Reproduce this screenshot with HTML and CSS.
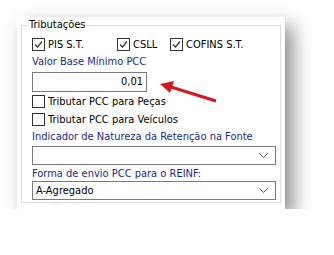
FILE: index.html
```html
<!DOCTYPE html>
<html lang="pt">
<head>
  <meta charset="UTF-8" />
  <title>Tributações</title>
  <link rel="stylesheet" href="styles.css">
</head>
<body>
  <div class="shot">
    <fieldset class="group">
      <legend>Tributações</legend>

      <div class="checks">
        <label class="chk w-pis"><span class="box"><svg viewBox="0 0 11 11"><path d="M2 5.5 L4.5 8 L9 2.5" /></svg></span>PIS S.T.</label>
        <label class="chk w-csll"><span class="box"><svg viewBox="0 0 11 11"><path d="M2 5.5 L4.5 8 L9 2.5" /></svg></span>CSLL</label>
        <label class="chk"><span class="box"><svg viewBox="0 0 11 11"><path d="M2 5.5 L4.5 8 L9 2.5" /></svg></span>COFINS S.T.</label>
      </div>

      <div class="field-label">Valor Base Mínimo PCC</div>
      <div class="num-input">0,01</div>

      <label class="chk row"><span class="box"></span>Tributar PCC para Peças</label>
      <label class="chk row"><span class="box"></span>Tributar PCC para Veículos</label>

      <div class="field-label">Indicador de Natureza da Retenção na Fonte</div>
      <div class="combo">
        <span></span>
        <svg class="chev" viewBox="0 0 9 5"><path d="M0.5 0.5 L4.5 4.5 L8.5 0.5" /></svg>
      </div>

      <div class="field-label">Forma de envio PCC para o REINF:</div>
      <div class="combo last">
        <span>A-Agregado</span>
        <svg class="chev" viewBox="0 0 9 5"><path d="M0.5 0.5 L4.5 4.5 L8.5 0.5" /></svg>
      </div>
    </fieldset>

    <!-- annotation arrow -->
    <svg class="arrow" viewBox="0 0 60 24">
      <path d="M57 20 L12 6" />
      <polygon points="1,3 15,0 11,12" />
    </svg>
  </div>
</body>
</html>
```

FILE: styles.css
```css
body { margin: 0; background: #fff; font-family: "DejaVu Sans Condensed", "DejaVu Sans", sans-serif; font-size: 11px; color: #000; }
.shot { position: relative; margin: 17px 0 0 17px; width: 268px; height: 192px; background: #fff; box-shadow: 8px 9px 18px rgba(0,0,0,0.45); padding: 1px 4px 0; box-sizing: border-box; }
.group { margin: 0; padding: 0 4px 2px 10px; border: 1px solid #dcdcdc; }
.group legend { padding: 0 1px; margin-left: -4px; line-height: 14px; }
.checks { display: flex; height: 18px; margin-top: 3px; align-items: center; }
.w-pis { width: 85px; }
.w-csll { width: 53px; }
.chk { display: flex; align-items: center; gap: 3px; }
.chk.row { height: 18px; }
.box { width: 11px; height: 11px; border: 1px solid #333; background: #fff; display: inline-block; }
.box svg { width: 11px; height: 11px; display: block; }
.box path { fill: none; stroke: #333; stroke-width: 1.2; }
.field-label { color: #1c2a8c; height: 14px; line-height: 14px; margin-top: 2px; }
.num-input { width: 115px; height: 20px; border: 1px solid #7a7a7a; box-sizing: border-box; text-align: right; padding: 0 3px; line-height: 18px; margin-top: 3px; }
.combo { display: flex; justify-content: space-between; align-items: center; height: 19px; border: 1px solid #7a7a7a; box-sizing: border-box; padding: 0 7px 0 3px; margin-top: 2px; }
.combo.last { margin-top: 0; }
.chev { width: 9px; height: 5px; }
.chev path { fill: none; stroke: #555; stroke-width: 1; }
.arrow { position: absolute; left: 142px; top: 64px; width: 60px; height: 24px; }
.arrow path { stroke: #d41a1f; stroke-width: 3; fill: none; }
.arrow polygon { fill: #d41a1f; }
```
